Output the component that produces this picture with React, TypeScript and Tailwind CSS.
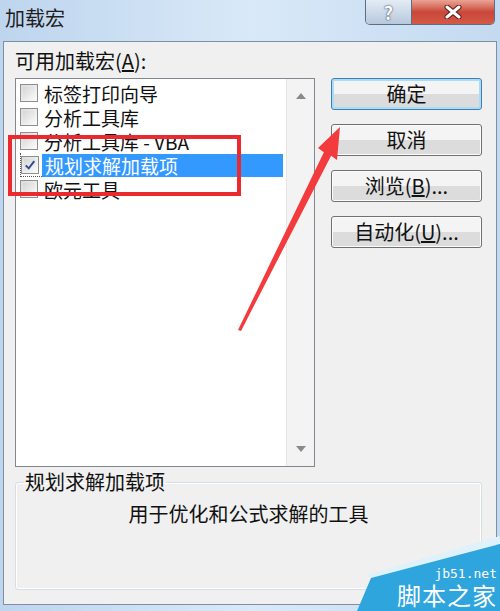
import React from 'react';

const cjk = { fontFamily: '"Noto Sans CJK SC", "Liberation Sans", sans-serif' };

interface AddIn {
    name: string;
    checked: boolean;
}

const addIns: AddIn[] = [
    { name: '标签打印向导', checked: false },
    { name: '分析工具库', checked: false },
    { name: '分析工具库 - VBA', checked: false },
    { name: '规划求解加载项', checked: true },
    { name: '欧元工具', checked: false },
];

function CheckBox({ checked }: { checked: boolean }) {
    return (
        <div className="flex h-[18px] w-[18px] shrink-0 items-center justify-center border border-[#8f8f8f] bg-gradient-to-br from-[#dcdcdc] to-[#fbfbfb] p-[2px]">
            <div className="flex h-full w-full items-center justify-center bg-gradient-to-br from-[#d6d6d6] to-[#f8f8f8]">
                {checked && (
                    <svg width="14" height="14" viewBox="0 0 14 14">
                        <path d="M2 7.5 L5.5 11 L12 2.5" fill="none" stroke="#2e4a8c" strokeWidth="2.2" />
                    </svg>
                )}
            </div>
        </div>
    );
}

function DialogButton({ children, primary }: { children: React.ReactNode; primary?: boolean }) {
    return (
        <button
            className={
                'flex h-[32px] w-[151px] items-center justify-center rounded-[3px] border bg-gradient-to-b from-[#f4f4f4] from-50% to-[#dcdcdc] to-50% text-[20px] leading-none text-[#111] ' +
                (primary
                    ? 'border-[#3c7fb1] shadow-[inset_0_0_0_2px_#a9dcf5]'
                    : 'border-[#707070] shadow-[inset_0_0_0_1px_#fcfcfc]')
            }
            style={cjk}
        >
            {children}
        </button>
    );
}

export default function App() {
    return (
        <div
            className="relative flex h-[611px] w-[500px] flex-col overflow-hidden bg-gradient-to-r from-[#bed5ee] via-[#d9e9f8] to-[#c4daf1]"
            style={cjk}
        >
            {/* title bar */}
            <div className="flex h-[41px] shrink-0 items-start justify-between">
                <span className="ml-[5px] mt-[7px] text-[20px] leading-[22px] text-[#1e1e1e]">加载宏</span>
                <div className="mr-[5px] flex h-[25px] overflow-hidden rounded-b-[5px] border border-t-0 border-[#5b6e86]">
                    <div className="flex w-[46px] items-center justify-center border-r border-[#5b6e86] bg-gradient-to-b from-[#e4ecf5] to-[#b8c8dc]">
                        <span className="text-[18px] font-bold leading-none text-white [text-shadow:0_0_2px_#3a4a60,0_0_1px_#3a4a60]">
                            ?
                        </span>
                    </div>
                    <div className="flex w-[82px] items-center justify-center bg-gradient-to-b from-[#e9a495] via-[#c9463a] to-[#d45a45]">
                        <svg width="18" height="14" viewBox="0 0 18 14">
                            <path d="M3 2 L15 12 M15 2 L3 12" stroke="#5a1a14" strokeWidth="5" strokeLinecap="round" />
                            <path d="M3 2 L15 12 M15 2 L3 12" stroke="#ffffff" strokeWidth="3" strokeLinecap="round" />
                        </svg>
                    </div>
                </div>
            </div>

            {/* client area */}
            <div className="mx-[3px] flex h-[564px] flex-col border border-[#7f8fa3] bg-[#f0f0f0] pl-[11px] pr-[12px]">
                <div className="flex gap-[16px]">
                    <div className="flex w-[300px] flex-col">
                        <span className="mt-[9px] text-[20px] leading-[20px] text-[#111]">
                            可用加载宏(<u>A</u>):
                        </span>
                        <div className="mt-[7px] flex h-[389px] border border-[#828790] bg-white">
                            <div className="flex flex-1 flex-col pt-[2px]">
                                {addIns.map((a) => (
                                    <div key={a.name} className="flex h-[24px] items-center">
                                        <div
                                            className={
                                                'ml-[4px] flex h-[24px] items-center pr-[3px] ' +
                                                (a.checked ? 'border-b border-l border-dotted border-[#555]' : '')
                                            }
                                        >
                                            <CheckBox checked={a.checked} />
                                        </div>
                                        <span
                                            className={
                                                'mr-[3px] flex h-[23px] flex-1 items-center pl-[3px] text-[19px] leading-[23px] ' +
                                                (a.checked ? 'bg-[#3399ff] text-white' : 'text-[#111]')
                                            }
                                        >
                                            {a.name}
                                        </span>
                                    </div>
                                ))}
                            </div>
                            <div className="flex w-[28px] flex-col items-center justify-between border-l border-[#e6e6e6] bg-[#f3f3f3] py-[14px]">
                                <svg width="10" height="6" viewBox="0 0 10 6">
                                    <path d="M0 6 L5 0 L10 6 Z" fill="#8a8a8a" />
                                </svg>
                                <svg width="10" height="6" viewBox="0 0 10 6">
                                    <path d="M0 0 L5 6 L10 0 Z" fill="#8a8a8a" />
                                </svg>
                            </div>
                        </div>
                    </div>
                    <div className="mt-[36px] flex flex-col gap-[14px]">
                        <DialogButton primary>确定</DialogButton>
                        <DialogButton>取消</DialogButton>
                        <DialogButton>
                            浏览(<u>B</u>)...
                        </DialogButton>
                        <DialogButton>
                            自动化(<u>U</u>)...
                        </DialogButton>
                    </div>
                </div>

                <fieldset className="mt-[5px] h-[118px] w-[467px] rounded-[3px] border border-[#d5dfe5] px-[8px] shadow-[inset_0_0_0_1px_#ffffff]">
                    <legend className="px-[1px] text-[20px] leading-[20px] text-[#111]">规划求解加载项</legend>
                    <p className="mt-[12px] text-center text-[20px] leading-[20px] text-[#111]">用于优化和公式求解的工具</p>
                </fieldset>
            </div>

            {/* annotations */}
            <div className="absolute left-[8px] top-[135px] h-[61px] w-[233px] border-[4px] border-[#ea2a2e]" />
            <svg className="absolute left-0 top-0" width="500" height="611" viewBox="0 0 500 611">
                <polygon
                    points="238,330 323.9,152.2 318,148 340,127 337,160 331.1,155.8 241,331"
                    fill="#f33a3c"
                />
                <polygon points="366,575 500,536 500,544 371,578" fill="#dff1fa" />
                <polygon points="371,578 500,544 500,611 357,611" fill="#2ea5dd" />
            </svg>
            <div className="absolute bottom-[4px] right-[3px] flex flex-col items-end gap-[2px]">
                <span className="text-[13px] leading-[14px] text-white" style={{ fontFamily: '"DejaVu Sans Mono", monospace' }}>
                    jb51.net
                </span>
                <span className="text-[24px] leading-[24px] tracking-[1px] text-white">脚本之家</span>
            </div>
        </div>
    );
}
